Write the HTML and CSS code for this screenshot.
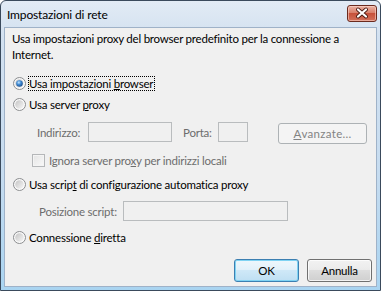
FILE: index.html
```html
<!DOCTYPE html>
<html lang="it">
<head>
<meta charset="utf-8">
<title>Impostazioni di rete</title>
<link rel="stylesheet" href="styles.css">
</head>
<body>
<div class="window">
  <div class="titlebar">
    <span class="title">Impostazioni di rete</span>
    <span class="close">
      <svg width="30" height="17" viewBox="0 0 30 17">
        <path d="M11 4.5 L19 11.5 M19 4.5 L11 11.5" stroke="#4a1a12" stroke-width="4" stroke-linecap="round"/>
        <path d="M11 4.5 L19 11.5 M19 4.5 L11 11.5" stroke="#ffffff" stroke-width="2.2" stroke-linecap="round"/>
      </svg>
    </span>
  </div>
  <div class="client">
    <p class="desc">Usa impostazioni proxy del browser predefinito per la connessione a<br>Internet.</p>

    <div class="opt opt-1">
      <svg class="radio" width="13" height="13" viewBox="0 0 13 13">
        <defs>
          <linearGradient id="rOuter" x1="0" y1="0" x2="1" y2="1">
            <stop offset="0" stop-color="#f6f6f6"/>
            <stop offset="1" stop-color="#fdfdfd"/>
          </linearGradient>
          <linearGradient id="rInner" x1="0" y1="0" x2="1" y2="1">
            <stop offset="0" stop-color="#c4c4c4"/>
            <stop offset="1" stop-color="#f7f7f7"/>
          </linearGradient>
          <radialGradient id="rDot" cx="0.4" cy="0.35" r="0.7">
            <stop offset="0" stop-color="#c6e8ff"/>
            <stop offset="0.45" stop-color="#3f8ad4"/>
            <stop offset="1" stop-color="#1b4b86"/>
          </radialGradient>
        </defs>
        <circle cx="6.5" cy="6.5" r="6" fill="url(#rOuter)" stroke="#8b8d8f"/>
        <circle cx="6.5" cy="6.5" r="4.3" fill="url(#rInner)"/>
        <circle cx="6.5" cy="6.5" r="3.3" fill="url(#rDot)"/>
      </svg>
      <span class="lbl focus">Usa impostazioni <u>b</u>rowser</span>
    </div>

    <div class="opt opt-2">
      <svg class="radio" width="13" height="13" viewBox="0 0 13 13">
        <circle cx="6.5" cy="6.5" r="6" fill="url(#rOuter)" stroke="#8b8d8f"/>
        <circle cx="6.5" cy="6.5" r="4.3" fill="url(#rInner)"/>
      </svg>
      <span class="lbl">Usa server <u>p</u>roxy</span>
    </div>

    <div class="proxy-row">
      <span class="dlabel lbl-ind">Indirizzo:</span>
      <span class="field f-addr"></span>
      <span class="dlabel lbl-port">Porta:</span>
      <span class="field f-port"></span>
      <span class="btn btn-disabled btn-adv"><u>A</u>vanzate...</span>
    </div>

    <div class="check-row">
      <span class="checkbox"></span>
      <span class="dlabel">Ignora server pro<u>x</u>y per indirizzi locali</span>
    </div>

    <div class="opt opt-3">
      <svg class="radio" width="13" height="13" viewBox="0 0 13 13">
        <circle cx="6.5" cy="6.5" r="6" fill="url(#rOuter)" stroke="#8b8d8f"/>
        <circle cx="6.5" cy="6.5" r="4.3" fill="url(#rInner)"/>
      </svg>
      <span class="lbl">Usa scrip<u>t</u> di configurazione automatica proxy</span>
    </div>

    <div class="script-row">
      <span class="dlabel lbl-script">Posizione script:</span>
      <span class="field f-script"></span>
    </div>

    <div class="opt opt-4">
      <svg class="radio" width="13" height="13" viewBox="0 0 13 13">
        <circle cx="6.5" cy="6.5" r="6" fill="url(#rOuter)" stroke="#8b8d8f"/>
        <circle cx="6.5" cy="6.5" r="4.3" fill="url(#rInner)"/>
      </svg>
      <span class="lbl">Connessione <u>d</u>iretta</span>
    </div>

    <div class="buttons">
      <span class="btn btn-default">OK</span>
      <span class="btn">Annulla</span>
    </div>
  </div>
</div>
</body>
</html>
```

FILE: styles.css
```css
* { box-sizing: border-box; }

body {
  margin: 0;
  font-family: Lato, "Open Sans", sans-serif;
  font-size: 11.5px;
  letter-spacing: -0.22px;
  color: #000;
  background: #ffffff;
}

.window {
  width: 381px;
  height: 291px;
  border: 1px solid #3a4a5c;
  border-radius: 6px 6px 0 0;
  background: linear-gradient(180deg, #e2ebf5 0%, #d3e1f0 12%, #c6dcf0 60%, #a9d4f1 100%);
  padding: 0 3px 3px;
  display: flex;
  flex-direction: column;
  overflow: hidden;
}

.titlebar {
  height: 26px;
  flex: none;
  display: flex;
  align-items: center;
  justify-content: space-between;
  padding-left: 3px;
}

.title {
  font-size: 12px;
  letter-spacing: -0.15px;
  color: #000;
}

.close {
  width: 30px;
  height: 17px;
  margin-top: -1px;
  border: 1px solid #6b2a1e;
  border-radius: 3px;
  background: linear-gradient(180deg, #eab2a3 0%, #d9806b 45%, #c7513a 50%, #d2705a 100%);
  box-shadow: inset 0 0 0 1px rgba(255, 220, 210, 0.55);
  display: flex;
  align-items: center;
  justify-content: center;
}

.close svg { display: block; margin: -1px; }

.client {
  flex: 1;
  background: #f0f0f0;
  border: 1px solid #9fb2c8;
  display: flex;
  flex-direction: column;
  padding-top: 3px;
}

.desc {
  margin: 0 0 0 7px;
  line-height: 16px;
}

.opt {
  display: flex;
  align-items: center;
  height: 16px;
  margin-left: 8px;
}

.opt-1 { margin-top: 12px; }
.opt-2 { margin-top: 5px; }
.opt-3 { margin-top: 8px; }
.opt-4 { margin-top: 8px; }

.radio { flex: none; display: block; }

.lbl {
  margin-left: 2px;
  border: 1px dotted transparent;
  line-height: 13px;
  padding-right: 1px;
  white-space: nowrap;
}

.lbl.focus { border-color: #000; }

.dlabel {
  color: #6d6d6d;
  white-space: nowrap;
}

.field {
  height: 20px;
  border: 1px solid #b9bcbe;
  background: #f0f0f0;
  flex: none;
}

.proxy-row {
  display: flex;
  align-items: center;
  height: 20px;
  margin-top: 10px;
  margin-left: 32px;
}

.lbl-ind { width: 51px; flex: none; }
.f-addr { width: 84px; }
.lbl-port { width: 35px; margin-left: 11px; flex: none; }
.f-port { width: 30px; }

.btn-adv {
  margin-left: 30px;
  width: 89px !important;
  height: 21px !important;
  align-self: flex-start;
  margin-top: 1px;
  letter-spacing: 0.3px;
}

.check-row {
  display: flex;
  align-items: center;
  height: 16px;
  margin-top: 10px;
  margin-left: 27px;
}

.checkbox {
  width: 13px;
  height: 13px;
  flex: none;
  border: 1px solid #b5b7b9;
  background: linear-gradient(135deg, #e4e4e4 0%, #f9f9f9 100%);
  box-shadow: inset 0 0 0 1px #f4f4f4;
  margin-right: 4px;
}

.script-row {
  display: flex;
  align-items: center;
  height: 20px;
  margin-top: 9px;
  margin-left: 34px;
}

.lbl-script { width: 84px; flex: none; }
.f-script { width: 165px; }

.buttons {
  display: flex;
  justify-content: flex-end;
  gap: 8px;
  margin-top: 14px;
  margin-right: 4px;
}

.btn {
  display: flex;
  align-items: center;
  justify-content: center;
  width: 65px;
  height: 23px;
  border: 1px solid #707070;
  border-radius: 3px;
  background: linear-gradient(180deg, #f2f2f2 0%, #ebebeb 45%, #dddddd 50%, #cfcfcf 100%);
  box-shadow: inset 0 0 0 1px rgba(255, 255, 255, 0.75);
  color: #000;
  white-space: nowrap;
}

.btn-default {
  border-color: #3c7fb1;
  background: linear-gradient(180deg, #eef7fc 0%, #e2f1fa 45%, #cfe8f7 50%, #bedff3 100%);
  box-shadow: inset 0 0 0 1px #7fd3f3;
}

.btn-disabled {
  border-color: #adb2b5;
  background: #f4f4f4;
  box-shadow: none;
  color: #838383;
}
```
